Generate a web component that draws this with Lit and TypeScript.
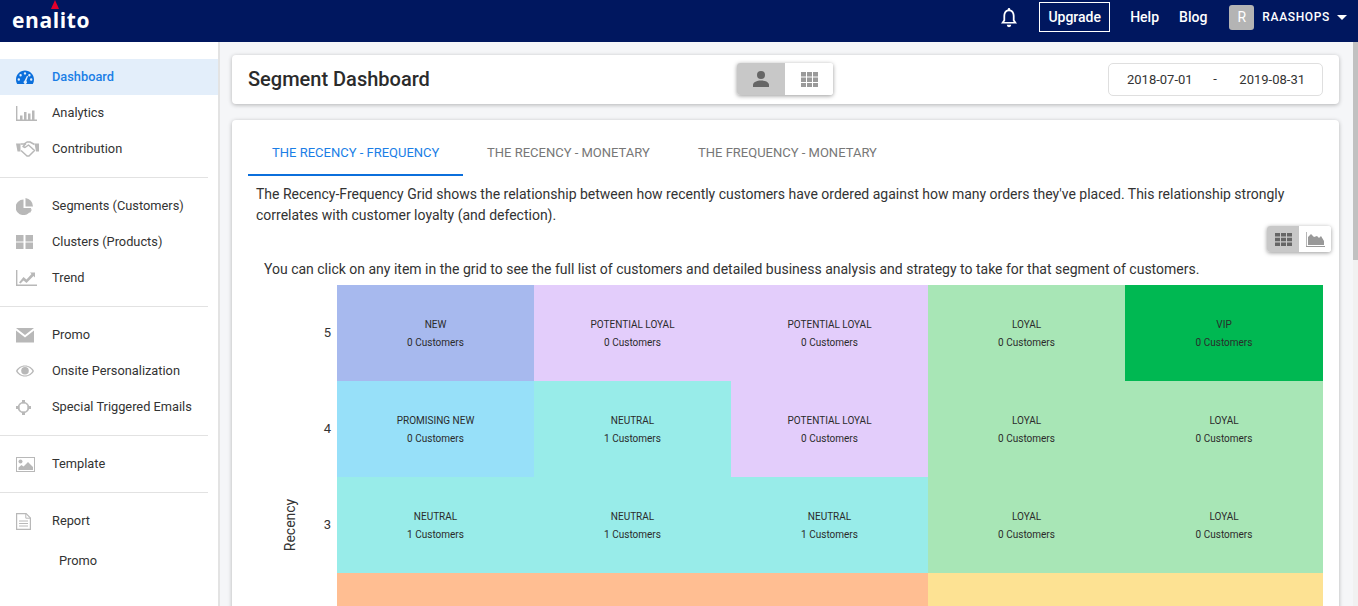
import { LitElement, html, css, svg } from "lit";
import { customElement } from "lit/decorators.js";

const icons: Record<string, unknown> = {
  gauge: svg`<path fill-rule="evenodd" d="M9 .5C4 .5 0 4.600 0 9.600c0 1.700.5 3.200 1.200 4.400h15.600c.8-1.200 1.200-2.700 1.200-4.400 0-5-4-9.100-9-9.100ZM9 2.200a1.200 1.200 0 1 1 0 2.400 1.200 1.200 0 0 1 0-2.400ZM4.600 4a1.200 1.200 0 1 1 0 2.400 1.200 1.200 0 0 1 0-2.400Zm8.800 0a1.200 1.200 0 1 1 0 2.400 1.200 1.200 0 0 1 0-2.400ZM2.800 8.300a1.200 1.200 0 1 1 0 2.400 1.200 1.200 0 0 1 0-2.400Zm12.400 0a1.200 1.200 0 1 1 0 2.400 1.200 1.200 0 0 1 0-2.400ZM11 5.800l1 .4-1.700 4.900a1.600 1.600 0 1 1-1.900-.1Z"/>`,
  bars: svg`<path d="M0 0h1.400v13.600H21V15H0Z"/><path d="M4 9.500h2.500V14H4ZM8 6h2.500v8H8ZM12 7.500h2.500V14H12ZM16 4.500h2.500V14H16Z"/>`,
  shake: svg`<path d="M0 2.500h4.500v8H1.500ZM18.500 2.500H23v8h-3Z"/><path fill="none" stroke="currentColor" stroke-width="1.500" stroke-linejoin="round" d="M4.500 3H8l3-2h3l4.500 2.500M5 9.500l6 5.500h2l5.500-5.500-6-5.500L9 6.500 7 5.500l3-3"/>`,
  pie: svg`<path d="M7.500 1.500A7.800 7.800 0 1 0 15.200 10H7.500Z"/><path d="M9.500 0v8.500H17A8.700 8.700 0 0 0 9.500 0Z"/><path d="M10 11.500h6l-2 3.500Z"/>`,
  clusters: svg`<path d="M0 0h7.500v6.500H0ZM9.500 0H17v6.500H9.500ZM0 7.500h7.500V14H0ZM9.500 7.500H17V14H9.500Z"/>`,
  trend: svg`<path d="M0 0h1.400v14.600H21V16H0Z"/><path d="M3 12.500 7.500 7l3 2.500L15.500 4l-1.500-1.500h5v5l-1.500-1.500-7 7-3-2.500-3 3Z"/>`,
  mail: svg`<path d="M0 0h18l-9 7ZM0 2.500l9 7 9-7V14.500H0Z"/>`,
  eye: svg`<path fill-rule="evenodd" d="M9 1.500C4.800 1.500 1.500 3.900 0 7c1.500 3.100 4.800 5.500 9 5.500s7.500-2.400 9-5.500c-1.500-3.100-4.800-5.500-9-5.500Zm0 1C12.400 2.500 15 4.400 16.500 7c-1.500 2.600-4.100 4.500-7.500 4.500S3 9.600 1.500 7C3 4.400 5.600 2.500 9 2.500Z"/><circle cx="9" cy="6.700" r="3.800"/>`,
  target: svg`<circle cx="7.500" cy="7.500" r="5" fill="none" stroke="currentColor" stroke-width="1.600"/><path d="M6 0h3v3.500H6ZM6 11.500h3V15H6ZM0 6h3.500v3H0ZM11.500 6H15v3h-3.500Z"/>`,
  image: svg`<path fill-rule="evenodd" d="M0 0h19v15H0Zm1 1v13h17V1Z"/><circle cx="4.500" cy="4.500" r="2"/><path d="M2.500 13v-2.500l3-2.500 2 1.500L12 5l5 5v3Z"/>`,
  doc: svg`<path fill="none" stroke="currentColor" stroke-width="1.200" d="M.6.6h9.500l4.300 4.300v11.500H.6Z"/><path fill="none" stroke="currentColor" d="M9.800.6v4.600h4.600M3 8h9M3 10.500h9M3 13h9"/>`,
};

const menu = [
  [
    { i: "gauge", w: 18, h: 14, t: "Dashboard", active: true },
    { i: "bars", w: 21, h: 15, t: "Analytics" },
    { i: "shake", w: 23, h: 16, t: "Contribution" },
  ],
  [
    { i: "pie", w: 17, h: 17, t: "Segments (Customers)" },
    { i: "clusters", w: 17, h: 14, t: "Clusters (Products)" },
    { i: "trend", w: 21, h: 16, t: "Trend" },
  ],
  [
    { i: "mail", w: 18, h: 15, t: "Promo" },
    { i: "eye", w: 18, h: 14, t: "Onsite Personalization" },
    { i: "target", w: 15, h: 15, t: "Special Triggered Emails" },
  ],
  [{ i: "image", w: 19, h: 15, t: "Template" }],
  [{ i: "doc", w: 15, h: 17, t: "Report" }],
];

const C = {
  n: "#a7b9ee",
  p: "#e3cdfb",
  l: "#a8e6b6",
  v: "#00b852",
  w: "#97e0f9",
  u: "#98ece9",
  o: "#ffbe92",
  y: "#fde293",
};

type Cell = [string, string, number] | [string];
const rows: { r: number; cells: Cell[] }[] = [
  { r: 5, cells: [["NEW", C.n, 0], ["POTENTIAL LOYAL", C.p, 0], ["POTENTIAL LOYAL", C.p, 0], ["LOYAL", C.l, 0], ["VIP", C.v, 0]] },
  { r: 4, cells: [["PROMISING NEW", C.w, 0], ["NEUTRAL", C.u, 1], ["POTENTIAL LOYAL", C.p, 0], ["LOYAL", C.l, 0], ["LOYAL", C.l, 0]] },
  { r: 3, cells: [["NEUTRAL", C.u, 1], ["NEUTRAL", C.u, 1], ["NEUTRAL", C.u, 1], ["LOYAL", C.l, 0], ["LOYAL", C.l, 0]] },
  { r: 0, cells: [[C.o], [C.o], [C.o], [C.y], [C.y]] },
  { r: 0, cells: [[C.o], [C.o], [C.o], [C.y], [C.y]] },
];

@customElement("app-root")
export class AppRoot extends LitElement {
  static styles = css`
    :host {
      display: block;
      width: 1358px;
      height: 606px;
      overflow: hidden;
      font-family: Roboto, "Liberation Sans", sans-serif;
      color: #333;
      background: #f5f6f8;
    }
    .top {
      height: 42px;
      background: #00175f;
      display: flex;
      align-items: center;
      color: #fff;
    }
    .logo {
      position: relative;
      margin-left: 12px;
      font: 700 21px/40px "Open Sans", sans-serif;
      letter-spacing: 0.6px;
      height: 42px;
    }
    .logo i {
      position: absolute;
      left: 39px;
      top: 0;
      width: 0;
      height: 0;
      border-left: 4px solid transparent;
      border-right: 4px solid transparent;
      border-bottom: 9px solid #e4002b;
    }
    .top-right {
      margin-left: auto;
      display: flex;
      align-items: center;
      font-size: 14px;
      font-weight: 500;
      padding-bottom: 8px;
    }
    .bell { width: 16px; height: 20px; fill: #fff; margin-right: 22px; margin-top: 2px; }
    .upgrade {
      border: 1px solid #fff;
      width: 71px;
      height: 30px;
      box-sizing: border-box;
      display: flex;
      align-items: center;
      justify-content: center;
      margin-right: 20px;
    }
    .help { margin-right: 20px; }
    .blog { margin-right: 22px; }
    .avatar {
      width: 25px;
      height: 25px;
      border-radius: 3px;
      background: #b4b4b4;
      display: flex;
      align-items: center;
      justify-content: center;
      font-size: 14px;
      font-weight: 400;
      margin-right: 8px;
    }
    .user { font-size: 12px; letter-spacing: 0.65px; }
    .caret {
      width: 0;
      height: 0;
      border-left: 5px solid transparent;
      border-right: 5px solid transparent;
      border-top: 5px solid #fff;
      margin: 0 11px 0 7px;
    }
    .body { display: flex; height: 564px; }
    .side {
      width: 218px;
      flex: none;
      box-sizing: content-box;
      background: #fff;
      border-right: 2px solid #e3e3e3;
      padding-top: 17px;
      font-size: 12.8px;
    }
    .group { padding-bottom: 10px; margin-bottom: 10px; border-bottom: 1px solid #e2e2e2; margin-right: 10px; }
    .group:nth-last-of-type(1) { border: 0; }
    .item {
      height: 36px;
      display: flex;
      align-items: center;
      margin-right: -10px;
      color: #333;
    }
    .item.active { background: #e3eefa; color: #1a7ee6; font-weight: 500; }
    .label { margin-bottom: 2px; }
    .ico { width: 52px; flex: none; display: flex; justify-content: flex-start; padding-left: 16px; box-sizing: border-box; color: #b8b8b8; }
    .ico svg { fill: currentColor; display: block; }
    .item.active .ico { color: #0b6fdc; }
    .sub { height: 44px; padding-left: 59px; display: flex; align-items: center; }
    .main { flex: 1; min-width: 0; padding: 13px 14px 0 12px; overflow: hidden; }
    .card { background: #fff; border-radius: 4px; box-shadow: 0 1px 4px rgba(0, 0, 0, 0.28); }
    .head {
      height: 49px;
      box-sizing: border-box;
      display: grid;
      grid-template-columns: 1fr auto 1fr;
      align-items: center;
      padding: 0 16px 1px;
      margin-bottom: 16px;
    }
    h1 { margin: 0; font-size: 20px; font-weight: 500; color: #2b2b2b; }
    .toggle { display: flex; border-radius: 3px; overflow: hidden; box-shadow: 0 1px 4px rgba(0, 0, 0, 0.4); }
    .toggle div { display: flex; align-items: center; justify-content: center; background: #fff; }
    .toggle .on { background: #c8c8c8; }
    .t1 { margin-left: -1px; }
    .t1 div { width: 48px; height: 32px; }
    .t1 svg { fill: #9a9a9a; }
    .t1 .on svg { fill: #666; }
    .dates {
      justify-self: end;
      width: 215px;
      height: 33px;
      box-sizing: border-box;
      border: 1px solid #dfdfdf;
      border-radius: 5px;
      display: flex;
      align-items: center;
      justify-content: space-between;
      padding: 0 17px 0 18px;
      font-size: 13px;
    }
    .dash { margin: 0 0 2px -2px; }
    .panel { height: 600px; padding: 0 16px; }
    .tabs { display: flex; height: 56px; font-size: 13px; color: #777; }
    .tab {
      width: 211px;
      box-sizing: border-box;
      padding: 10px 24px 0;
      display: flex;
      align-items: center;
      border-bottom: 2px solid transparent;
      white-space: nowrap;
    }
    .tab.on { width: 215px; color: #1a7ee6; border-bottom-color: #0b6fdc; }
    .desc { margin: 0 8px; font-size: 14px; line-height: 21px; padding-top: 8px; color: #333; }
    .t2row { display: flex; justify-content: flex-end; margin: 0 -8px 0 0; height: 26px; }
    .t2 div { width: 32px; height: 26px; }
    .t2 svg { fill: #666; }
    .t2 div:last-child svg { fill: #999; }
    .hint { margin: 7px 0 6px 16px; font-size: 14px; line-height: 20px; }
    .grid { display: flex; height: 480px; }
    .yname { width: 40px; flex: none; display: flex; align-items: center; justify-content: center; font-size: 14px; margin-left: 22px; }
    .yname span { transform: rotate(-90deg); white-space: nowrap; }
    .ylabels { width: 27px; flex: none; display: grid; grid-template-rows: repeat(5, 96px); font-size: 13px; }
    .ylabels span { display: flex; align-items: center; justify-content: flex-end; padding: 0 6px 2px 0; }
    .cells { flex: 1; display: grid; grid-template-columns: repeat(4, 197px) 1fr; grid-template-rows: repeat(5, 96px); }
    .cell {
      display: flex;
      flex-direction: column;
      align-items: center;
      justify-content: center;
      font-size: 10px;
      line-height: 18px;
      color: #2b2b2b;
      padding-top: 2px;
      box-sizing: border-box;
    }
    .track { width: 5px; flex: none; background: #f1f1f1; }
    .thumb { height: 218px; background: #c1c1c1; }
  `;

  render() {
    return html`
      <div class="top">
        <div class="logo">enalito<i></i></div>
        <div class="top-right">
          <svg class="bell" viewBox="0 0 18 20" preserveAspectRatio="none"><path fill-rule="evenodd" d="M9 0a1.400 1.400 0 0 1 1.400 1.500C13.600 2.100 15.300 4.800 15.300 7.800v4.200l2.700 3.500H0l2.700-3.500V7.800c0-3 1.700-5.700 4.900-6.300A1.400 1.400 0 0 1 9 0Zm0 3.300c-2.700 0-4.300 2.100-4.300 4.600v4.900L3.600 14h10.800l-1.100-1.200V7.900c0-2.500-1.600-4.600-4.300-4.600ZM6.500 16.700h5a2.500 2.500 0 0 1-5 0Z"/></svg>
          <div class="upgrade">Upgrade</div>
          <div class="help">Help</div>
          <div class="blog">Blog</div>
          <div class="avatar">R</div>
          <div class="user">RAASHOPS</div>
          <div class="caret"></div>
        </div>
      </div>
      <div class="body">
        <nav class="side">
          ${menu.map(
            (g) => html`<div class="group">
              ${g.map(
                (m) => html`<div class="item ${m.active ? "active" : ""}">
                  <span class="ico"><svg width=${m.w} height=${m.h} viewBox="0 0 ${m.w} ${m.h}">${icons[m.i]}</svg></span>
                  <span class="label">${m.t}</span>
                </div>`
              )}
              ${g[0].t === "Report" ? html`<div class="sub"><span class="label">Promo</span></div>` : ""}
            </div>`
          )}
        </nav>
        <main class="main">
          <section class="card head">
            <h1>Segment Dashboard</h1>
            <div class="toggle t1">
              <div class="on"><svg width="16" height="16" viewBox="0 0 16 16"><circle cx="8" cy="4" r="4"/><path d="M0 16v-2c0-3 4-4.500 8-4.500s8 1.500 8 4.500v2Z"/></svg></div>
              <div><svg width="17" height="15" viewBox="0 0 17 15"><path d="M0 0h5v4.500H0ZM6 0h5v4.500H6ZM12 0h5v4.500h-5ZM0 5.500h5V10H0ZM6 5.500h5V10H6ZM12 5.500h5V10h-5ZM0 11h5v4H0ZM6 11h5v4H6ZM12 11h5v4h-5Z"/></svg></div>
            </div>
            <div class="dates"><span>2018-07-01</span><span class="dash">-</span><span>2019-08-31</span></div>
          </section>
          <section class="card panel">
            <div class="tabs">
              <div class="tab on">THE RECENCY - FREQUENCY</div>
              <div class="tab">THE RECENCY - MONETARY</div>
              <div class="tab">THE FREQUENCY - MONETARY</div>
            </div>
            <p class="desc">The Recency-Frequency Grid shows the relationship between how recently customers have ordered against how many orders they've placed. This relationship strongly correlates with customer loyalty (and defection).</p>
            <div class="t2row">
              <div class="toggle t2">
                <div class="on"><svg width="17" height="13" viewBox="0 0 17 13"><path d="M0 0h5v3.500H0ZM6 0h5v3.500H6ZM12 0h5v3.500h-5ZM0 4.700h5v3.600H0ZM6 4.700h5v3.600H6ZM12 4.700h5v3.600h-5ZM0 9.500h5V13H0ZM6 9.500h5V13H6ZM12 9.500h5V13h-5Z"/></svg></div>
                <div><svg width="19" height="15" viewBox="0 0 19 15"><path d="M0 0h.7v14H19v1H0Z"/><path d="M2 13V5l3-3 3 3 3-1 2 2 2-2 3 5v4Z"/></svg></div>
              </div>
            </div>
            <div class="hint">You can click on any item in the grid to see the full list of customers and detailed business analysis and strategy to take for that segment of customers.</div>
            <div class="grid">
              <div class="yname"><span>Recency</span></div>
              <div class="ylabels">${rows.map((r) => html`<span>${r.r || ""}</span>`)}</div>
              <div class="cells">
                ${rows.map((r) =>
                  r.cells.map((c) =>
                    c.length === 1
                      ? html`<div class="cell" style="background:${c[0]}"></div>`
                      : html`<div class="cell" style="background:${c[1]}"><span>${c[0]}</span><span>${c[2]} Customers</span></div>`
                  )
                )}
              </div>
            </div>
          </section>
        </main>
        <div class="track"><div class="thumb"></div></div>
      </div>
    `;
  }
}
